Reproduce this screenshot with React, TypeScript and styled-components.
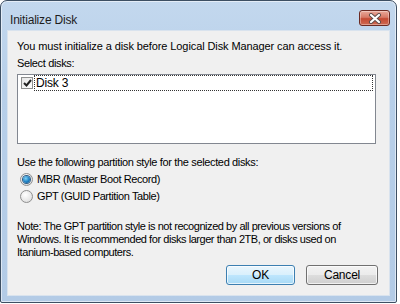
import React from "react";
import styled, { createGlobalStyle } from "styled-components";

const Global = createGlobalStyle`
  html, body { margin: 0; padding: 0; background: #ffffff; }
  body { font-family: "Liberation Sans", Arial, sans-serif; }
  * { box-sizing: border-box; }
`;

const Window = styled.div`
  width: 397px;
  height: 303px;
  border: 1px solid #3d4f63;
  border-radius: 7px 7px 2px 2px;
  background: linear-gradient(180deg, #c3d8ee 0%, #b7cfe9 30%, #b3cbe6 100%);
  box-shadow: inset 0 0 0 1px rgba(255,255,255,0.55);
  display: flex;
  flex-direction: column;
`;

const TitleBar = styled.div`
  height: 29px;
  display: flex;
  align-items: flex-start;
  justify-content: space-between;
  padding: 0 6px 0 9px;
`;

const Title = styled.div`
  font-family: "Liberation Sans", Arial, sans-serif;
  font-size: 12px;
  letter-spacing: -0.2px;
  color: #1e1e1e;
  margin-top: 12px;
  line-height: 14px;
`;

const CloseButton = styled.div`
  margin-top: 9px;
  width: 31px;
  height: 16px;
  border: 1px solid #6b2a22;
  border-radius: 3px;
  background: linear-gradient(180deg, #e9a99a 0%, #d77a67 45%, #c44a33 55%, #cf6a52 100%);
  box-shadow: inset 0 0 0 1px rgba(255,255,255,0.35);
  display: flex;
  align-items: center;
  justify-content: center;
`;

const Client = styled.div`
  flex: 1;
  margin: 0 6px 6px 6px;
  background: #f0f0f0;
  border: 1px solid #d9e3ee;
  padding: 6px 13px 0 9px;
  display: flex;
  flex-direction: column;
  font-family: "Liberation Sans", Arial, sans-serif;
  font-size: 11px;
  letter-spacing: -0.35px;
  color: #000;
`;

const Label = styled.div<{ $mt?: number; $ls?: number }>`
  line-height: 14px;
  height: 14px;
  margin-top: ${(p) => p.$mt ?? 0}px;
  white-space: nowrap;
  letter-spacing: ${(p) => p.$ls ?? -0.35}px;
`;

const ListBox = styled.div`
  margin-top: 4px;
  height: 70px;
  background: #ffffff;
  border: 1px solid #828790;
  padding: 0 2px;
`;

const ListRow = styled.div`
  display: flex;
  align-items: center;
  height: 16px;
`;

const CheckBox = styled.div`
  width: 12px;
  height: 12px;
  border: 1px solid #8e8f8f;
  background: linear-gradient(135deg, #e6e6e6 0%, #ffffff 100%);
  display: flex;
  align-items: center;
  justify-content: center;
  margin: 0 1px 0 1px;
  flex: none;
`;

const FocusItem = styled.div`
  flex: 1;
  height: 16px;
  border: 1px dotted #333;
  padding-left: 1px;
  line-height: 14px;
  font-size: 12px;
  letter-spacing: -0.2px;
`;

const RadioRow = styled.div<{ $mt?: number }>`
  display: flex;
  align-items: center;
  height: 16px;
  margin-top: ${(p) => p.$mt ?? 0}px;
  padding-left: 3px;
  font-size: 11px;
  letter-spacing: -0.4px;
`;

const Radio = styled.div`
  width: 13px;
  height: 13px;
  border-radius: 50%;
  border: 1px solid #8f8f8f;
  background: radial-gradient(circle at 40% 35%, #ffffff 0%, #e3e3e3 70%, #cfcfcf 100%);
  display: flex;
  align-items: center;
  justify-content: center;
  margin-right: 4px;
  flex: none;
`;

const RadioDot = styled.div`
  width: 7px;
  height: 7px;
  border-radius: 50%;
  background: radial-gradient(circle at 40% 35%, #7fd3f7 0%, #1d7fc2 55%, #0c4f86 100%);
  box-shadow: 0 0 0 1px #2f5d86;
`;

const Note = styled.div`
  margin-top: 16px;
  line-height: 13px;
  width: 340px;
  letter-spacing: -0.45px;
`;

const ButtonRow = styled.div`
  display: flex;
  justify-content: flex-end;
  gap: 11px;
  margin-top: 6px;
  margin-right: -2px;
`;

const Button = styled.div<{ $default?: boolean }>`
  width: ${(p) => (p.$default ? 69 : 72)}px;
  height: 20px;
  border: 1px solid ${(p) => (p.$default ? "#3c7fb1" : "#707070")};
  border-radius: 3px;
  background: ${(p) =>
    p.$default
      ? "linear-gradient(180deg, #eaf6fd 0%, #d9f0fc 50%, #bee6fd 51%, #a7d9f5 100%)"
      : "linear-gradient(180deg, #f2f2f2 0%, #ebebeb 50%, #dddddd 51%, #cfcfcf 100%)"};
  box-shadow: inset 0 0 0 1px rgba(255,255,255,0.7);
  display: flex;
  align-items: center;
  justify-content: center;
  font-size: 12px;
  letter-spacing: -0.2px;
  color: #000;
`;

export default function App() {
  return (
    <>
      <Global />
      <Window>
        <TitleBar>
          <Title>Initialize Disk</Title>
          <CloseButton>
            <svg width="14" height="11" viewBox="0 0 14 11">
              <path d="M3 2 L11 9 M11 2 L3 9" stroke="#5a4a48" strokeWidth="4" strokeLinecap="round" />
              <path d="M3 2 L11 9 M11 2 L3 9" stroke="#ffffff" strokeWidth="2.2" strokeLinecap="round" />
            </svg>
          </CloseButton>
        </TitleBar>
        <Client>
          <Label $mt={2} $ls={-0.1}>You must initialize a disk before Logical Disk Manager can access it.</Label>
          <Label $mt={3}>Select disks:</Label>
          <ListBox>
            <ListRow>
              <CheckBox>
                <svg width="9" height="8" viewBox="0 0 9 8">
                  <path d="M1 4 L3.5 6.5 L8 1" stroke="#222" strokeWidth="2" fill="none" />
                </svg>
              </CheckBox>
              <FocusItem>Disk 3</FocusItem>
            </ListRow>
          </ListBox>
          <Label $mt={11}>Use the following partition style for the selected disks:</Label>
          <RadioRow $mt={2}>
            <Radio>
              <RadioDot />
            </Radio>
            MBR (Master Boot Record)
          </RadioRow>
          <RadioRow $mt={1}>
            <Radio />
            GPT (GUID Partition Table)
          </RadioRow>
          <Note>
            Note: The GPT partition style is not recognized by all previous versions of Windows. It is recommended for disks larger than 2TB, or disks used on Itanium-based computers.
          </Note>
          <ButtonRow>
            <Button $default>OK</Button>
            <Button>Cancel</Button>
          </ButtonRow>
        </Client>
      </Window>
    </>
  );
}
